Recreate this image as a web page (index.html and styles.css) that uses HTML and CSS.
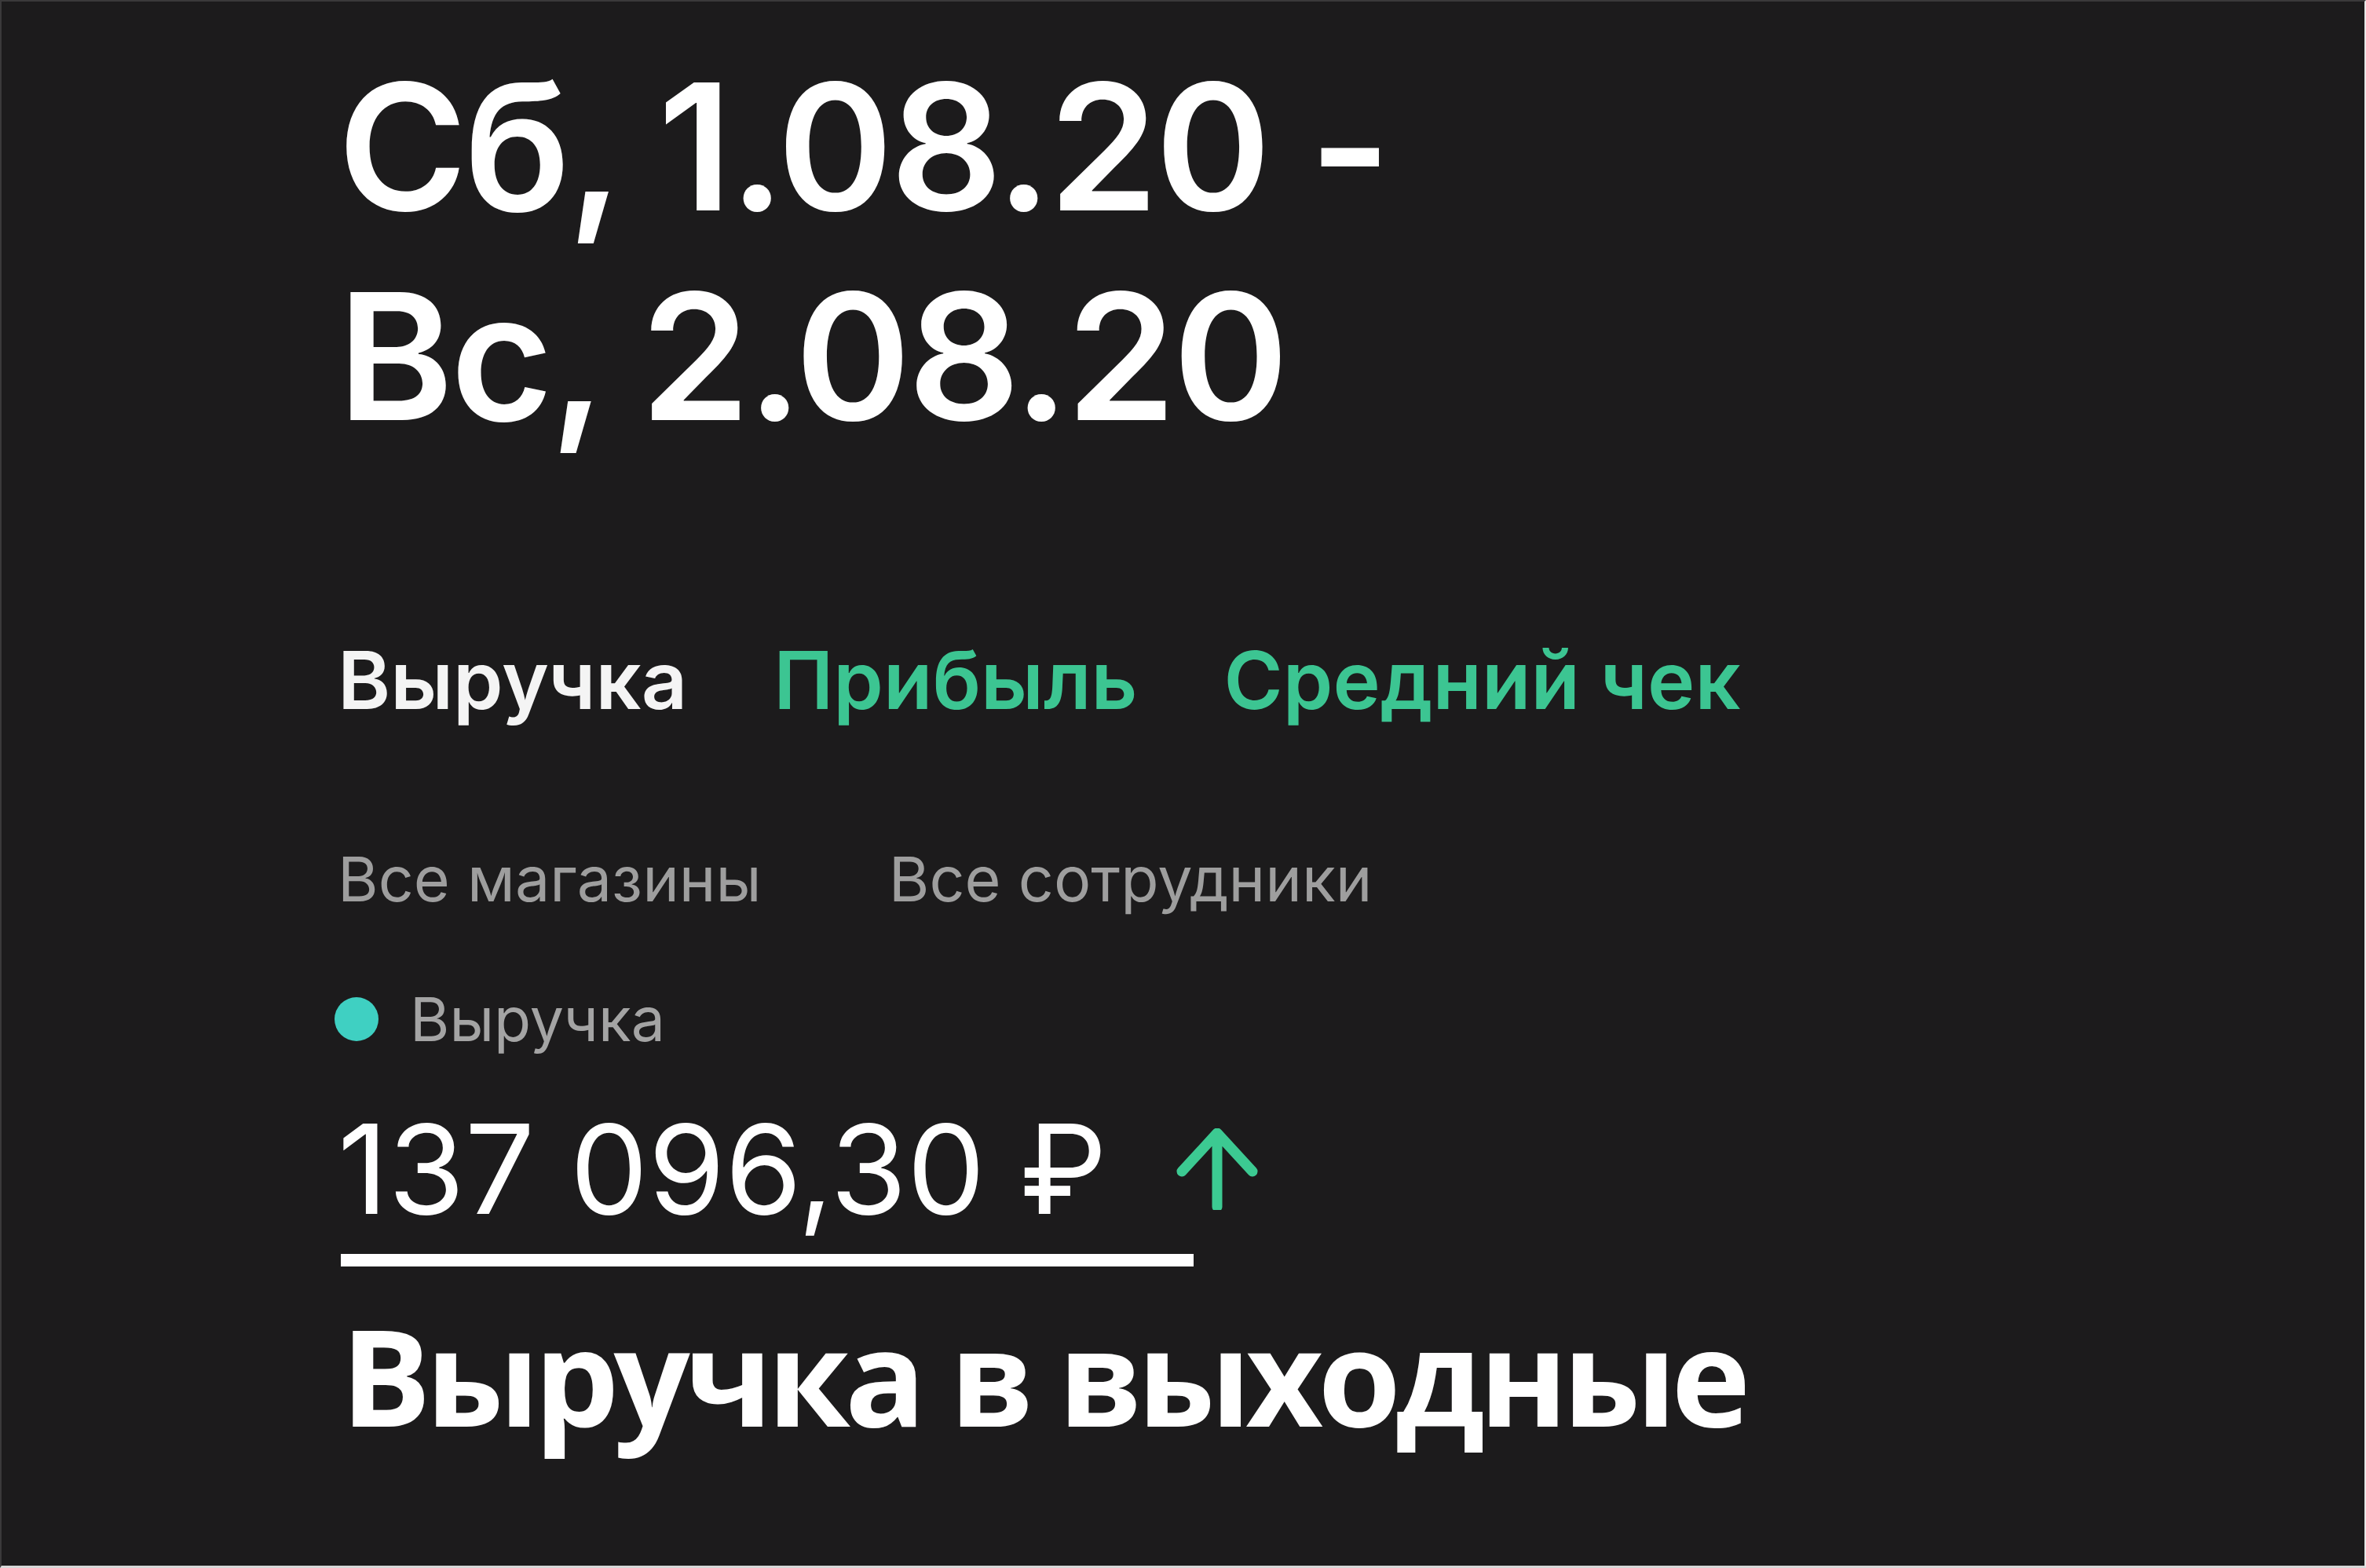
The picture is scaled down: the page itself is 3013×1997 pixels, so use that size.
FILE: index.html
```html
<!DOCTYPE html>
<html lang="ru">
<head>
<meta charset="utf-8">
<link rel="stylesheet" href="styles.css">
</head>
<body>
<main class="frame">
  <section class="content">
    <h1 class="period">Сб, 1.08.20 -<br>Вс, 2.08.20</h1>
    <nav class="tabs">
      <span class="tab tab-active">Выручка</span>
      <span class="tab">Прибыль</span>
      <span class="tab">Средний чек</span>
    </nav>
    <div class="filters">
      <span class="filter">Все магазины</span>
      <span class="filter">Все сотрудники</span>
    </div>
    <div class="legend">
      <span class="dot"></span>
      <span class="legend-label">Выручка</span>
    </div>
    <div class="amount-row">
      <span class="amount">137 096,30 ₽</span>
      <svg class="arrow" viewBox="0 0 104 104" width="104" height="104">
        <path d="M7 55 L52 6 L97 55 M52 8 L52 100" fill="none" stroke="#3cca92" stroke-width="13" stroke-linecap="round" stroke-linejoin="round"/>
      </svg>
    </div>
    <div class="underline"></div>
    <p class="caption">Выручка в выходные</p>
  </section>
</main>
</body>
</html>
```
FILE: styles.css
```css
html, body {
  margin: 0;
  padding: 0;
  background: #1c1b1c;
}
.frame {
  box-sizing: border-box;
  width: 3013px;
  height: 1997px;
  background: #1c1b1c;
  border-top: 2px solid #3a393a;
  border-left: 2px solid #3a393a;
  border-right: 2px solid #e6e6e6;
  border-bottom: 3px solid #d8d8d8;
  overflow: hidden;
}
.content {
  padding-left: 428px;
  padding-top: 51px;
  font-family: Inter, "Noto Sans", sans-serif;
}
.period {
  margin: 0;
  font-size: 224px;
  line-height: 267px;
  font-weight: 600;
  color: #ffffff;
  letter-spacing: -4px;
}
.tabs {
  display: flex;
  gap: 110px;
  margin-top: 219px;
  font-size: 102px;
  line-height: 120px;
  font-weight: 600;
}
.tab { color: #3cc592; }
.tab-active { color: #f4f4f4; }
.filters {
  display: flex;
  gap: 162px;
  margin-top: 147px;
  font-size: 79px;
  line-height: 92px;
  color: #9e9e9e;
}
.legend {
  display: flex;
  align-items: center;
  gap: 40px;
  margin-top: 88px;
  font-size: 77px;
  line-height: 90px;
  color: #a4a4a4;
}
.dot {
  width: 56px;
  height: 56px;
  border-radius: 50%;
  background: #3fd0c2;
  margin-left: -4px;
}
.amount-row {
  display: flex;
  align-items: center;
  gap: 88px;
  margin-top: 56px;
}
.amount {
  font-size: 158px;
  line-height: 180px;
  color: #ffffff;
  letter-spacing: 0;
}
.arrow { display: block; }
.underline {
  width: 1086px;
  height: 16px;
  background: #ffffff;
  margin-top: 18px;
  margin-left: 4px;
}
.caption {
  margin: 38px 0 0 4px;
  font-family: "Open Sans", sans-serif;
  font-weight: 700;
  font-size: 171px;
  line-height: 200px;
  color: #ffffff;
  letter-spacing: -7px;
}
```
